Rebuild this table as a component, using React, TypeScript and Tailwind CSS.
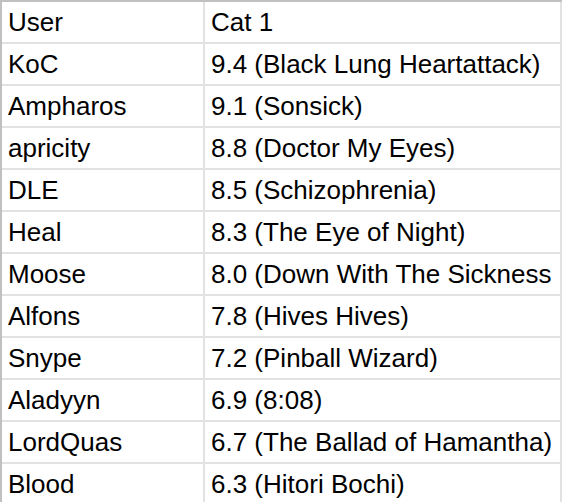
import React from "react";

const rows: [string, string][] = [
  ["User", "Cat 1"],
  ["KoC", "9.4 (Black Lung Heartattack)"],
  ["Ampharos", "9.1 (Sonsick)"],
  ["apricity", "8.8 (Doctor My Eyes)"],
  ["DLE", "8.5 (Schizophrenia)"],
  ["Heal", "8.3 (The Eye of Night)"],
  ["Moose", "8.0 (Down With The Sickness"],
  ["Alfons", "7.8 (Hives Hives)"],
  ["Snype", "7.2 (Pinball Wizard)"],
  ["Aladyyn", "6.9 (8:08)"],
  ["LordQuas", "6.7 (The Ballad of Hamantha)"],
  ["Blood", "6.3 (Hitori Bochi)"],
];

export default function App() {
  return (
    <div
      className="w-[562px] h-[502px] overflow-hidden bg-white border-t-2 border-l-2 border-[#c0c0c0] text-black text-[26px] leading-[40px]"
      style={{ fontFamily: '"Liberation Sans", Arial, sans-serif' }}
    >
      {rows.map(([u, c], i) => (
        <div key={i} className="flex h-[42px] shrink-0 border-b-2 border-[#e2e2e2]">
          <div className="w-[203px] shrink-0 border-r-2 border-[#e2e2e2] pl-[6px] whitespace-nowrap overflow-hidden">
            {u}
          </div>
          <div className="w-[357px] shrink-0 border-r-2 border-[#e2e2e2] pl-[6px] whitespace-nowrap overflow-hidden">
            {c}
          </div>
        </div>
      ))}
    </div>
  );
}
